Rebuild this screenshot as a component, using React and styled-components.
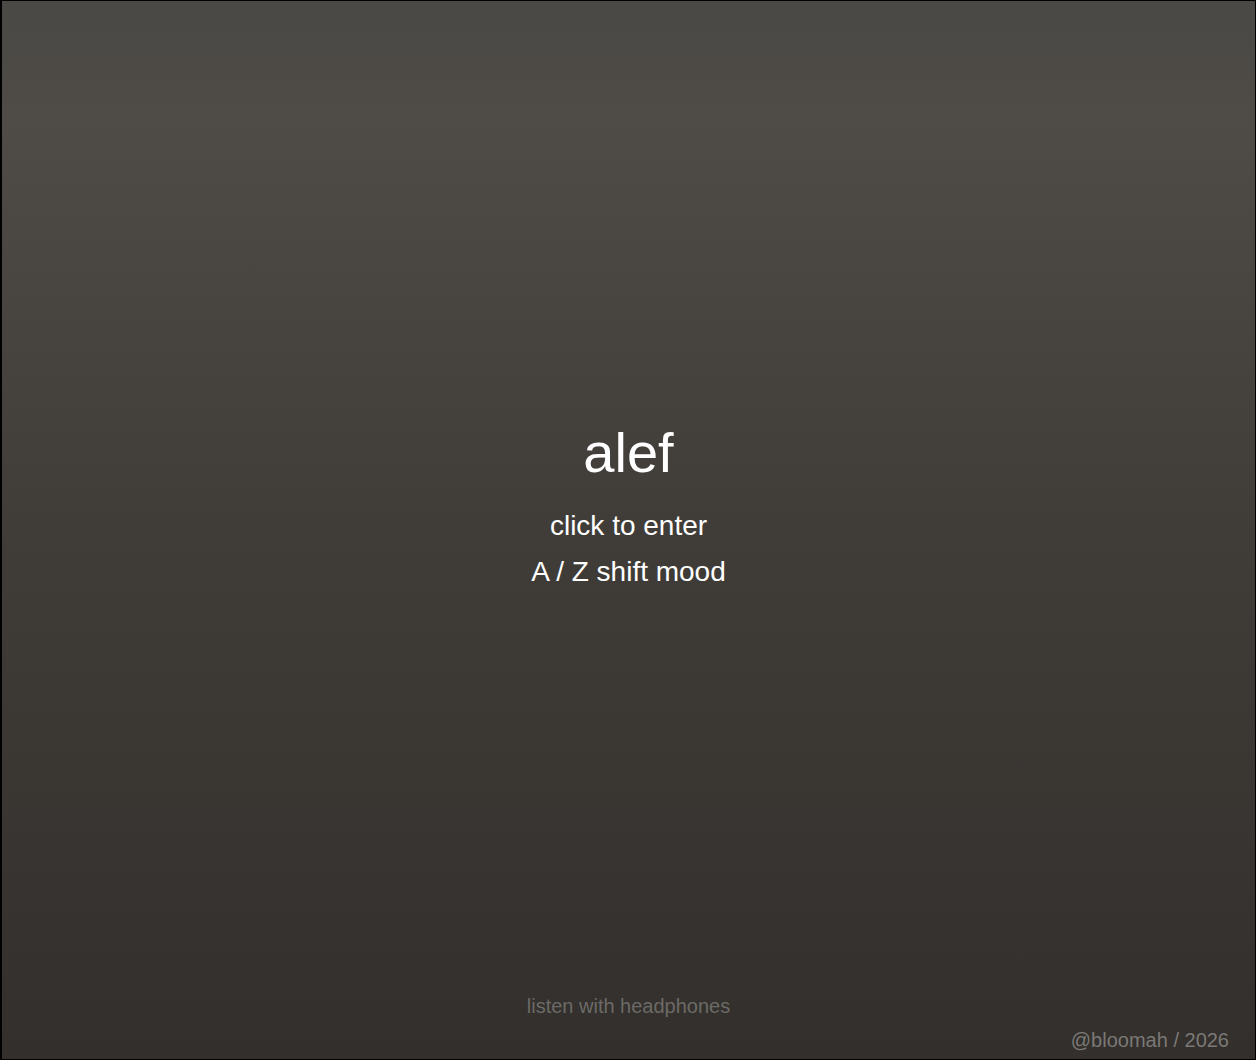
import React from "react";
import styled, { createGlobalStyle } from "styled-components";

const GlobalStyle = createGlobalStyle`
  html, body {
    margin: 0;
    padding: 0;
    height: 100%;
  }
  body {
    font-family: "Liberation Sans", Helvetica, Arial, sans-serif;
    background: #000;
  }
`;

const Screen = styled.div`
  box-sizing: border-box;
  height: 100vh;
  display: flex;
  flex-direction: column;
  border: 1px solid #000;
  border-left-width: 2px;
  background: linear-gradient(
    180deg,
    #4a4945 0%,
    #4f4b47 11%,
    #403d39 50%,
    #322f2c 100%
  );
  color: #fff;
  padding: 0 26px 7px 0;
  cursor: pointer;
`;

const Center = styled.main`
  flex: 1;
  display: flex;
  flex-direction: column;
  align-items: center;
  justify-content: center;
  padding-top: 21px;
`;

const Title = styled.h1`
  margin: 0 0 18px;
  font-size: 56px;
  line-height: 64px;
  font-weight: 400;
  padding-left: 26px;
`;

const Hint = styled.p`
  margin: 0;
  font-size: 28px;
  line-height: 46px;
  padding-left: 26px;
`;

const Footer = styled.footer`
  display: flex;
  flex-direction: column;
  gap: 10px;
`;

const Note = styled.p`
  margin: 0;
  font-size: 20px;
  line-height: 24px;
  color: ${(p) => p.$color || "#6c6a66"};
  padding-left: ${(p) => (p.$center ? "26px" : "0")};
  text-align: ${(p) => (p.$center ? "center" : "right")};
`;

export default function App() {
  return (
    <>
      <GlobalStyle />
      <Screen>
        <Center>
          <Title>alef</Title>
          <Hint>click to enter</Hint>
          <Hint>A / Z shift mood</Hint>
        </Center>
        <Footer>
          <Note $center>listen with headphones</Note>
          <Note $color="#7b7975">@bloomah / 2026</Note>
        </Footer>
      </Screen>
    </>
  );
}
